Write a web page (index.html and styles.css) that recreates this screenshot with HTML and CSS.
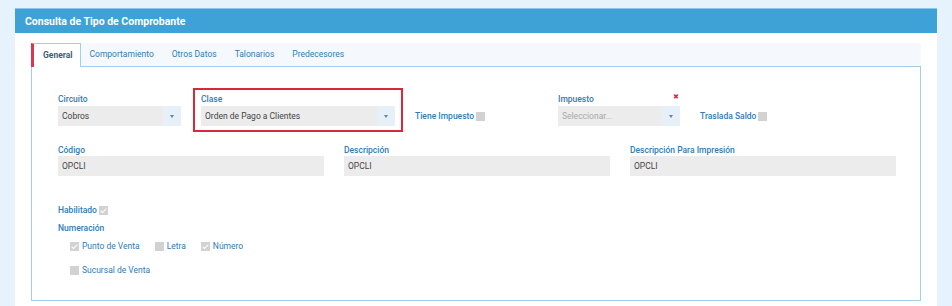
FILE: index.html
```html
<!DOCTYPE html>
<html lang="es">

<head>
    <meta charset="UTF-8">
    <meta name="viewport" content="width=device-width, initial-scale=1.0">
    <title>Consulta de Tipo de Comprobante</title>
    <link rel="stylesheet" href="styles.css">
</head>

<body>
    <div class="panel">
        <div class="panel-heading">Consulta de Tipo de Comprobante</div>
        <div class="panel-body">
            <!-- pestañas -->
            <ul class="tabs">
                <li class="tab active">General</li>
                <li class="tab">Comportamiento</li>
                <li class="tab">Otros Datos</li>
                <li class="tab">Talonarios</li>
                <li class="tab">Predecesores</li>
            </ul>
            <div class="tab-content">
                <!-- fila 1 -->
                <div class="row-top">
                    <div class="field field-circuito">
                        <label class="label">Circuito</label>
                        <div class="select">
                            <span class="value">Cobros</span>
                            <span class="caret"></span>
                        </div>
                    </div>
                    <div class="field field-clase">
                        <label class="label">Clase</label>
                        <div class="select">
                            <span class="value">Orden de Pago a Clientes</span>
                            <span class="caret"></span>
                        </div>
                    </div>
                    <div class="check-field check-impuesto">
                        <span class="label">Tiene Impuesto</span>
                        <span class="box"></span>
                    </div>
                    <div class="field field-impuesto">
                        <div class="label-row">
                            <label class="label">Impuesto</label>
                            <span class="clear">&#10006;</span>
                        </div>
                        <div class="select">
                            <span class="value placeholder">Seleccionar...</span>
                            <span class="caret"></span>
                        </div>
                    </div>
                    <div class="check-field check-saldo">
                        <span class="label">Traslada Saldo</span>
                        <span class="box"></span>
                    </div>
                </div>

                <!-- fila 2 -->
                <div class="row-inputs">
                    <div class="field">
                        <label class="label">Código</label>
                        <div class="input">OPCLI</div>
                    </div>
                    <div class="field">
                        <label class="label">Descripción</label>
                        <div class="input">OPCLI</div>
                    </div>
                    <div class="field">
                        <label class="label">Descripción Para Impresión</label>
                        <div class="input">OPCLI</div>
                    </div>
                </div>

                <!-- habilitado / numeración -->
                <div class="line line-habilitado">
                    <span class="label">Habilitado</span>
                    <span class="box checked"></span>
                </div>
                <div class="line line-numeracion">
                    <span class="label">Numeración</span>
                </div>
                <div class="options">
                    <span class="option"><span class="box checked"></span>Punto de Venta</span>
                    <span class="option"><span class="box"></span>Letra</span>
                    <span class="option"><span class="box checked"></span>Número</span>
                </div>
                <div class="options options-last">
                    <span class="option"><span class="box"></span>Sucursal de Venta</span>
                </div>
            </div>
        </div>
    </div>
</body>

</html>
```

FILE: styles.css
```css
html * {
    margin: 0;
    padding: 0;
    box-sizing: border-box;
}

body {
    background: #e6f2fc;
    font-family: Roboto, "Liberation Sans", sans-serif;
    font-size: 8.5px;
    color: #444;
    padding: 8px 15px 0 15px;
}

.panel {
    background: #fff;
    height: 298px;
}

.panel-heading {
    height: 25px;
    line-height: 25px;
    background: #3ea2d6;
    border-top: 1px solid #8cc6e6;
    color: #fff;
    font-size: 10.5px;
    font-weight: bold;
    padding-left: 10px;
}

.panel-body {
    padding: 10px 16px 0 16px;
}

/* pestañas */
.tabs {
    list-style: none;
    display: flex;
    height: 24px;
    background: #f5f9fd;
    border-bottom: 1px solid #a4cde7;
}

.tab {
    padding: 0 9px;
    line-height: 23px;
    color: #2f7cb6;
}

.tab.active {
    background: #fff;
    border-left: 3px solid #d9374f;
    border-top: 1px solid #a4cde7;
    border-right: 1px solid #a4cde7;
    margin-bottom: -1px;
    height: 24px;
    padding: 0 7px 0 9px;
    font-weight: bold;
    color: #3f5f78;
}

.tab-content {
    border: 1px solid #a4cde7;
    border-top: none;
    height: 234px;
    padding: 21px 26px 0 26px;
}

.label {
    display: block;
    color: #2f7cb6;
    font-weight: 500;
    line-height: 12px;
}

/* fila 1 */
.row-top {
    display: flex;
    align-items: flex-start;
    gap: 12px;
    height: 44px;
}

.field-circuito,
.field-impuesto {
    margin-top: 5px;
}

.field-circuito {
    width: 123px;
}

.field-impuesto {
    width: 122px;
}

.field-clase {
    width: 210px;
    border: 2px solid #d8283f;
    padding: 3px 6px 4px 6px;
}

.label-row {
    display: flex;
    justify-content: space-between;
    align-items: center;
}

.clear {
    color: #d8284a;
    font-size: 7px;
    margin-right: 1px;
    margin-top: -5px;
}

.select {
    display: flex;
    height: 20px;
    margin-top: 1px;
    background: #ececec;
}

.select .value {
    flex: 1;
    line-height: 20px;
    padding-left: 4px;
    white-space: nowrap;
    overflow: hidden;
}

.placeholder {
    color: #a9a9a9;
}

.caret {
    position: relative;
    width: 18px;
    background: #e7f0f8;
}

.caret::after {
    content: '';
    position: absolute;
    left: 7px;
    top: 9px;
    border-left: 2.5px solid transparent;
    border-right: 2.5px solid transparent;
    border-top: 3px solid #5a87ab;
}

.check-field {
    display: flex;
    align-items: center;
    height: 20px;
    margin-top: 18px;
}

.check-field .label {
    margin-right: 2px;
}

.check-impuesto {
    width: 131px;
}

.check-saldo {
    margin-left: 8px;
}

.box {
    position: relative;
    display: inline-block;
    width: 9px;
    height: 9px;
    background: #d2d2d2;
}

.box.checked::after {
    content: '';
    position: absolute;
    left: 3px;
    top: 1px;
    width: 2px;
    height: 5px;
    border-right: 1px solid #fff;
    border-bottom: 1px solid #fff;
    transform: rotate(45deg);
}

/* fila 2 */
.row-inputs {
    display: grid;
    grid-template-columns: 266px 266px 266px;
    gap: 20px;
    margin-top: 12px;
}

.input {
    height: 20px;
    line-height: 20px;
    background: #ececec;
    padding-left: 4px;
}

/* habilitado / numeración */
.line {
    display: flex;
    align-items: center;
    height: 12px;
}

.line-habilitado {
    margin-top: 28px;
}

.line-habilitado .label {
    margin-right: 2px;
}

.line-numeracion {
    margin-top: 6px;
}

.options {
    display: flex;
    gap: 15px;
    margin-top: 6px;
    padding-left: 12px;
    height: 12px;
    align-items: center;
    color: #2f7cb6;
}

.options-last {
    margin-top: 12px;
}

.option {
    display: flex;
    align-items: center;
}

.option .box {
    margin-right: 3px;
}
```
